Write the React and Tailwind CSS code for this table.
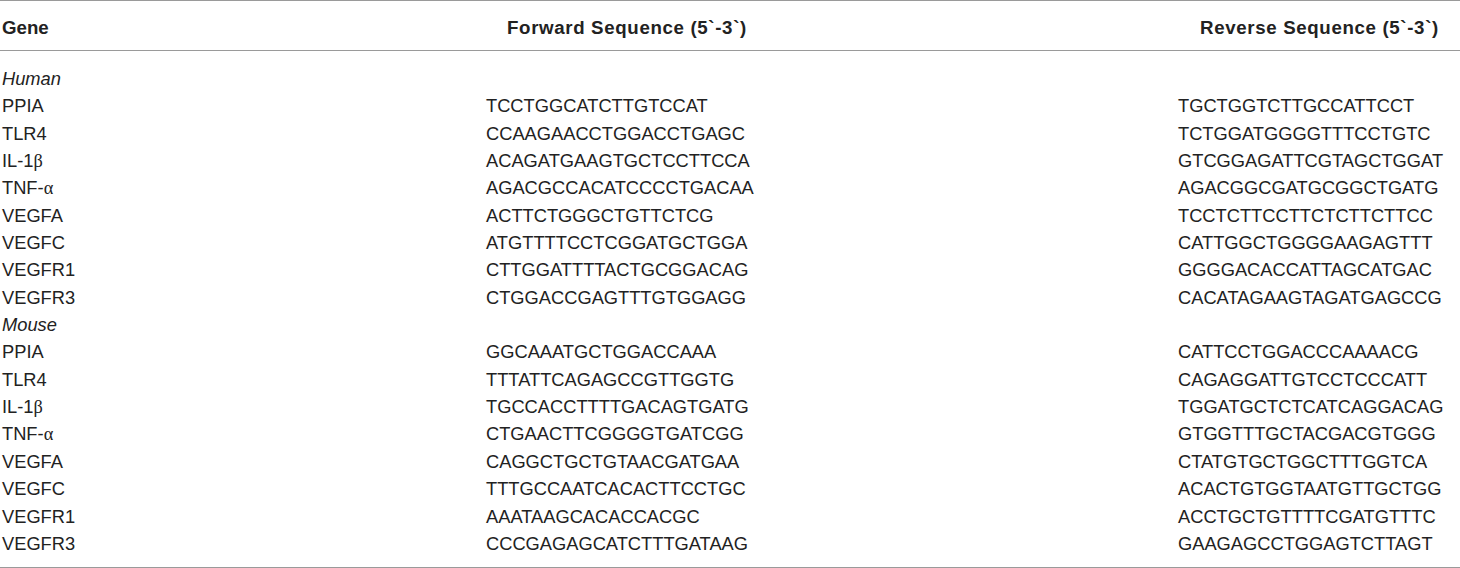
import React from "react";

const B = ({ children }) => (
  <span className="font-['Liberation_Serif',serif] leading-none">{children}</span>
);

const human = [
  ["PPIA", "TCCTGGCATCTTGTCCAT", "TGCTGGTCTTGCCATTCCT"],
  ["TLR4", "CCAAGAACCTGGACCTGAGC", "TCTGGATGGGGTTTCCTGTC"],
  [<>IL-1<B>β</B></>, "ACAGATGAAGTGCTCCTTCCA", "GTCGGAGATTCGTAGCTGGAT"],
  [<>TNF-<B>α</B></>, "AGACGCCACATCCCCTGACAA", "AGACGGCGATGCGGCTGATG"],
  ["VEGFA", "ACTTCTGGGCTGTTCTCG", "TCCTCTTCCTTCTCTTCTTCC"],
  ["VEGFC", "ATGTTTTCCTCGGATGCTGGA", "CATTGGCTGGGGAAGAGTTT"],
  ["VEGFR1", "CTTGGATTTTACTGCGGACAG", "GGGGACACCATTAGCATGAC"],
  ["VEGFR3", "CTGGACCGAGTTTGTGGAGG", "CACATAGAAGTAGATGAGCCG"],
];

const mouse = [
  ["PPIA", "GGCAAATGCTGGACCAAA", "CATTCCTGGACCCAAAACG"],
  ["TLR4", "TTTATTCAGAGCCGTTGGTG", "CAGAGGATTGTCCTCCCATT"],
  [<>IL-1<B>β</B></>, "TGCCACCTTTTGACAGTGATG", "TGGATGCTCTCATCAGGACAG"],
  [<>TNF-<B>α</B></>, "CTGAACTTCGGGGTGATCGG", "GTGGTTTGCTACGACGTGGG"],
  ["VEGFA", "CAGGCTGCTGTAACGATGAA", "CTATGTGCTGGCTTTGGTCA"],
  ["VEGFC", "TTTGCCAATCACACTTCCTGC", "ACACTGTGGTAATGTTGCTGG"],
  ["VEGFR1", "AAATAAGCACACCACGC", "ACCTGCTGTTTTCGATGTTTC"],
  ["VEGFR3", "CCCGAGAGCATCTTTGATAAG", "GAAGAGCCTGGAGTCTTAGT"],
];

function Row({ r }) {
  return (
    <div className="grid grid-cols-[486px_692px_1fr] h-[27.35px] leading-[27.35px]">
      <div className="pl-[2px]">{r[0]}</div>
      <div>{r[1]}</div>
      <div>{r[2]}</div>
    </div>
  );
}

function Group({ label }) {
  return (
    <div className="grid grid-cols-[486px_692px_1fr] h-[27.35px] leading-[27.35px]">
      <div className="pl-[2px] italic">{label}</div>
      <div />
      <div />
    </div>
  );
}

export default function App() {
  return (
    <div className="w-[1460px] h-[568px] bg-white text-[#222] font-['Liberation_Sans',Arial,sans-serif] text-[18.3px] overflow-hidden">
      <div className="border-t border-b border-[#9a9a9a]">
        <div className="grid grid-cols-[486px_692px_1fr] h-[49px] pt-[6px] items-center font-bold box-border text-[18.7px]">
          <div className="pl-[2px]">Gene</div>
          <div className="pl-[21px] tracking-[0.65px]">Forward Sequence (5`-3`)</div>
          <div className="pl-[22px] tracking-[0.65px]">Reverse Sequence (5`-3`)</div>
        </div>
      </div>
      <div className="pt-[14px] pb-[10px] border-b border-[#9a9a9a]">
        <Group label="Human" />
        {human.map((r, i) => (
          <Row key={"h" + i} r={r} />
        ))}
        <Group label="Mouse" />
        {mouse.map((r, i) => (
          <Row key={"m" + i} r={r} />
        ))}
      </div>
    </div>
  );
}
